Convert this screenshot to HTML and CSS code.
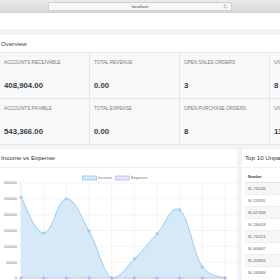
FILE: index.html
```html
<!DOCTYPE html>
<html>
<head>
    <title>Dashboard</title>
    <link rel="stylesheet" href="styles.css">
</head>
<body>

<div class="browser-bar">
    <div class="url-box">
        <span class="url-text">localhost</span>
        <svg class="reload" width="5" height="5" viewBox="0 0 10 10">
            <path d="M8 5 A3 3 0 1 1 5 2" fill="none" stroke="#9a9a9a" stroke-width="1.2"/>
            <path d="M4.5 0.3 L7 2 L4.5 3.7 Z" fill="#9a9a9a"/>
        </svg>
    </div>
</div>

<div class="topnav"></div>

<div class="panel">
    <div class="panel-head">Overview</div>
    <div class="stats">
        <div class="stat">
            <p class="stat-label">Accounts Receivable</p>
            <p class="stat-value">408,904.00</p>
        </div>
        <div class="stat">
            <p class="stat-label">Total Revenue</p>
            <p class="stat-value">0.00</p>
        </div>
        <div class="stat">
            <p class="stat-label">Open Sales Orders</p>
            <p class="stat-value">3</p>
        </div>
        <div class="stat">
            <p class="stat-label">Unpaid Sales Invoices</p>
            <p class="stat-value">8</p>
        </div>
        <div class="stat">
            <p class="stat-label">Accounts Payable</p>
            <p class="stat-value">543,366.00</p>
        </div>
        <div class="stat">
            <p class="stat-label">Total Expense</p>
            <p class="stat-value">0.00</p>
        </div>
        <div class="stat">
            <p class="stat-label">Open Purchase Orders</p>
            <p class="stat-value">8</p>
        </div>
        <div class="stat">
            <p class="stat-label">Unpaid Purchase Invoices</p>
            <p class="stat-value">11</p>
        </div>
    </div>
</div>

<div class="cards">
    <div class="card chart-card">
        <div class="card-head">Income vs Expense</div>
        <svg class="chart" width="237" height="112" viewBox="0 0 237 112">
            <!-- legend -->
            <rect x="82.5" y="8" width="14" height="4" fill="#d6e9f8" stroke="#8fc6ef" stroke-width="0.8"/>
            <text x="98" y="11.4" class="legend-text">Income</text>
            <rect x="115.5" y="8" width="14" height="4" fill="#ebe2fc" stroke="#c8b2f6" stroke-width="0.8"/>
            <text x="131" y="11.4" class="legend-text">Expense</text>

            <!-- horizontal grid -->
            <g stroke="#ececec" stroke-width="0.6">
                <line x1="19" y1="15" x2="237" y2="15"/>
                <line x1="19" y1="30.8" x2="237" y2="30.8"/>
                <line x1="19" y1="46.7" x2="237" y2="46.7"/>
                <line x1="19" y1="62.5" x2="237" y2="62.5"/>
                <line x1="19" y1="78.3" x2="237" y2="78.3"/>
                <line x1="19" y1="94.2" x2="237" y2="94.2"/>
            </g>
            <!-- vertical grid -->
            <g stroke="#ececec" stroke-width="0.6">
                <line x1="43.7" y1="15" x2="43.7" y2="110"/>
                <line x1="66.3" y1="15" x2="66.3" y2="110"/>
                <line x1="89" y1="15" x2="89" y2="110"/>
                <line x1="111.7" y1="15" x2="111.7" y2="110"/>
                <line x1="134.3" y1="15" x2="134.3" y2="110"/>
                <line x1="157" y1="15" x2="157" y2="110"/>
                <line x1="179.7" y1="15" x2="179.7" y2="110"/>
                <line x1="202.3" y1="15" x2="202.3" y2="110"/>
                <line x1="225" y1="15" x2="225" y2="110"/>
            </g>
            <line x1="21" y1="15" x2="21" y2="110" stroke="#dcdcdc" stroke-width="0.6"/>

            <!-- y labels -->
            <g class="tick">
                <text x="17" y="16.4">300000</text>
                <text x="17" y="32.2">250000</text>
                <text x="17" y="48.1">200000</text>
                <text x="17" y="63.9">150000</text>
                <text x="17" y="79.7">100000</text>
                <text x="17" y="95.6">50000</text>
                <text x="17" y="111.4">0</text>
            </g>

            <!-- income area -->
            <path d="M21,29.3 C25.5,36.4 34.6,64.7 43.7,65 C52.8,65.3 57.2,31.2 66.3,30.8 C75.4,30.4 79.9,47.3 89,63.1 C98.1,78.9 102.6,104.4 111.7,110 C120.8,110 125.2,99.9 134.3,91 C143.4,82.1 147.9,75.5 157,65.7 C166.1,55.9 170.6,36.5 179.7,41.9 C188.8,48.5 193.2,85.3 202.3,98.9 C211.4,110 220.5,107.8 225,110 L21,110 Z" fill="#d6e9f8"/>
            <path d="M21,29.3 C25.5,36.4 34.6,64.7 43.7,65 C52.8,65.3 57.2,31.2 66.3,30.8 C75.4,30.4 79.9,47.3 89,63.1 C98.1,78.9 102.6,104.4 111.7,110 C120.8,110 125.2,99.9 134.3,91 C143.4,82.1 147.9,75.5 157,65.7 C166.1,55.9 170.6,36.5 179.7,41.9 C188.8,48.5 193.2,85.3 202.3,98.9 C211.4,110 220.5,107.8 225,110" fill="none" stroke="#8fc6ef" stroke-width="0.9"/>

            <!-- expense line -->
            <line x1="21" y1="110" x2="225" y2="110" stroke="#c8b2f6" stroke-width="0.9"/>

            <g fill="#a9d2f3" stroke="#8fc6ef" stroke-width="0.5">
                <circle cx="21" cy="29.3" r="1.3"/>
                <circle cx="43.7" cy="65" r="1.3"/>
                <circle cx="66.3" cy="30.8" r="1.3"/>
                <circle cx="89" cy="63.1" r="1.3"/>
                <circle cx="111.7" cy="110" r="1.3"/>
                <circle cx="134.3" cy="91" r="1.3"/>
                <circle cx="157" cy="65.7" r="1.3"/>
                <circle cx="179.7" cy="41.9" r="1.3"/>
                <circle cx="202.3" cy="98.9" r="1.3"/>
                <circle cx="225" cy="110" r="1.3"/>
            </g>
            <g fill="#cdbaf7" stroke="#b9a0f3" stroke-width="0.5">
                <circle cx="21" cy="110" r="1.3"/>
                <circle cx="43.7" cy="110" r="1.3"/>
                <circle cx="66.3" cy="110" r="1.3"/>
                <circle cx="89" cy="110" r="1.3"/>
                <circle cx="111.7" cy="110" r="1.3"/>
                <circle cx="134.3" cy="110" r="1.3"/>
                <circle cx="157" cy="110" r="1.3"/>
                <circle cx="179.7" cy="110" r="1.3"/>
                <circle cx="202.3" cy="110" r="1.3"/>
                <circle cx="225" cy="110" r="1.3"/>
            </g>
        </svg>
    </div>

    <div class="card list-card">
        <div class="card-head">Top 10 Unpaid Invoices</div>
        <table class="invoices">
            <tr><th>Number</th><th>Customer</th></tr>
            <tr class="striped"><td>SL-750246</td><td></td></tr>
            <tr><td>SL-113950</td><td></td></tr>
            <tr class="striped"><td>SL-617608</td><td></td></tr>
            <tr><td>SL-280418</td><td></td></tr>
            <tr class="striped"><td>SL-750113</td><td></td></tr>
            <tr><td>SL-606847</td><td></td></tr>
            <tr class="striped"><td>SL-324834</td><td></td></tr>
            <tr><td>SL-165806</td><td></td></tr>
        </table>
    </div>
</div>

</body>
</html>
```

FILE: styles.css
```css
body{
    margin: 0;
    width: 280px;
    height: 280px;
    overflow: hidden;
    background-color: #f3f3f4;
    font-family: "Liberation Sans", Arial, sans-serif;
}

p{
    margin: 0;
}

.browser-bar{
    height: 13px;
    background: linear-gradient(#ebebeb, #d6d6d6);
    display: flex;
    justify-content: center;
    align-items: center;
}

.url-box{
    width: 182px;
    height: 7px;
    margin-left: 0px;
    background-color: #f7f7f7;
    border: 0.5px solid #d0d0d0;
    border-radius: 1px;
    display: flex;
    justify-content: center;
    align-items: center;
    position: relative;
}

.url-text{
    font-size: 4.2px;
    color: #444;
}

.reload{
    position: absolute;
    right: 3px;
    top: 1px;
}

.topnav{
    height: 16px;
    background-color: white;
}

.panel{
    margin-top: 6px;
    background-color: white;
}

.panel-head{
    height: 17px;
    line-height: 17px;
    padding-left: 1px;
    font-size: 6.2px;
    color: #444;
    border-bottom: 1px solid #ebebeb;
}

.stats{
    display: grid;
    grid-template-columns: repeat(4, 90px);
    background-color: #f7f8f9;
}

.stat{
    height: 38px;
    padding: 7px 4px 0;
    border-right: 1px solid #e6e6e6;
    border-bottom: 1px solid #e6e6e6;
    white-space: nowrap;
}

.stat-label{
    font-size: 4.7px;
    line-height: 6px;
    color: #7a7a7a;
    text-transform: uppercase;
}

.stat-value{
    margin-top: 15px;
    font-size: 7.8px;
    line-height: 9px;
    font-weight: bold;
    color: #3b3b3b;
}

.cards{
    display: flex;
    gap: 5px;
    margin-top: 4px;
}

.card{
    background-color: white;
    flex: none;
    height: 140px;
}

.chart-card{
    width: 237px;
}

.list-card{
    width: 120px;
    padding: 0 3px;
}

.card-head{
    height: 18px;
    line-height: 18px;
    padding-left: 1px;
    font-size: 6.2px;
    color: #333;
    border-bottom: 1px solid #efefef;
    white-space: nowrap;
}

.list-card .card-head{
    padding-left: 0;
    margin: 0 -3px;
    padding: 0 3px;
}

.chart{
    display: block;
}

.legend-text{
    font-size: 4.2px;
    fill: #777;
}

.tick text{
    font-size: 4px;
    fill: #777;
    text-anchor: end;
}

.invoices{
    margin-top: 3px;
    width: 100%;
    border-collapse: collapse;
    font-size: 3.6px;
    color: #555;
}

.invoices th{
    text-align: left;
    height: 11px;
    padding: 0 3px;
    color: #333;
    border-bottom: 0.5px solid #e2e2e2;
}

.invoices td{
    height: 11px;
    padding: 0 3px;
    border-top: 0.5px solid #eeeeee;
}

.striped{
    background-color: #f6f6f6;
}
```
